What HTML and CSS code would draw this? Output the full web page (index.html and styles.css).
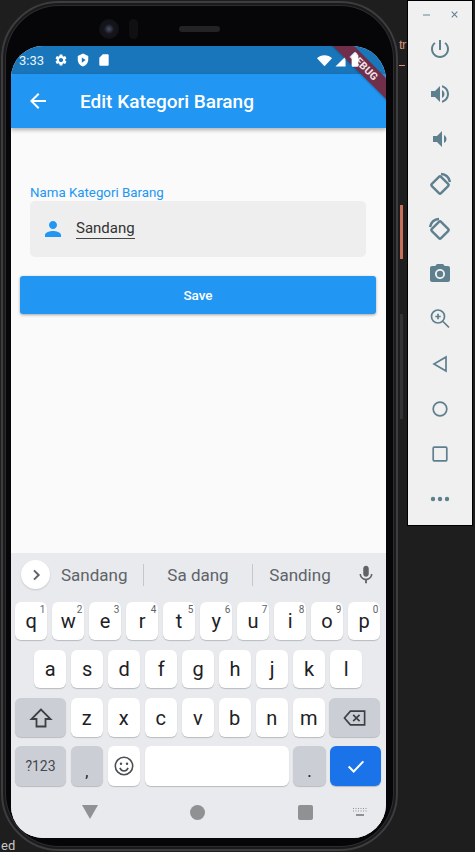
FILE: index.html
```html
<!DOCTYPE html>
<html lang="id">
<head>
  <meta charset="UTF-8">
  <title>Edit Kategori Barang</title>
  <link rel="stylesheet" href="styles.css">
</head>
<body>
  <div class="phone">
    <div class="phone-top">
      <span class="lens"></span>
      <span class="sensor"></span>
      <span class="speaker"></span>
    </div>
    <div class="screen">
      <div class="ribbon"><span>DEBUG</span></div>

      <div class="statusbar">
        <span class="time">3:33</span>
        <svg class="st st-gear" viewBox="0 0 24 24"><path d="M19.14 12.94c.04-.3.06-.61.06-.94 0-.32-.02-.64-.07-.94l2.03-1.58c.18-.14.23-.41.12-.61l-1.92-3.32c-.12-.22-.37-.29-.59-.22l-2.39.96c-.5-.38-1.03-.7-1.62-.94l-.36-2.54c-.04-.24-.24-.41-.48-.41h-3.84c-.24 0-.43.17-.47.41l-.36 2.54c-.59.24-1.13.57-1.62.94l-2.39-.96c-.22-.08-.47 0-.59.22L2.74 8.87c-.12.21-.08.47.12.61l2.03 1.58c-.05.3-.09.63-.09.94s.02.64.07.94l-2.03 1.58c-.18.14-.23.41-.12.61l1.92 3.32c.12.22.37.29.59.22l2.39-.96c.5.38 1.03.7 1.62.94l.36 2.54c.05.24.24.41.48.41h3.84c.24 0 .44-.17.47-.41l.36-2.54c.59-.24 1.13-.56 1.62-.94l2.39.96c.22.08.47 0 .59-.22l1.92-3.32c.12-.22.07-.47-.12-.61l-2.01-1.58zM12 15.6c-1.98 0-3.6-1.62-3.6-3.6s1.62-3.6 3.6-3.6 3.6 1.62 3.6 3.6-1.62 3.6-3.6 3.6z"/></svg>
        <svg class="st st-shield" viewBox="0 0 24 24"><path fill-rule="evenodd" d="M12 1L3 5v6c0 5.55 3.84 10.74 9 12 5.16-1.26 9-6.45 9-12V5l-9-4zM10 7.5v9l6.5-4.5z"/></svg>
        <svg class="st st-sd" viewBox="0 0 24 24"><path d="M18 2h-8L4.02 8 4 20c0 1.1.9 2 2 2h12c1.1 0 2-.9 2-2V4c0-1.1-.9-2-2-2z"/></svg>
        <span class="spacer"></span>
        <svg class="st st-wifi" viewBox="0 0 24 24"><path d="M12 21L0 8.5C3 5.5 7.3 3.5 12 3.5s9 2 12 5z"/></svg>
        <svg class="st st-signal" viewBox="0 0 24 24"><path d="M1 23h22V1z"/></svg>
        <svg class="st st-battery" viewBox="0 0 24 24"><path d="M15.67 4H14V2h-4v2H8.33C7.6 4 7 4.6 7 5.33v15.33C7 21.4 7.6 22 8.33 22h7.33c.74 0 1.34-.6 1.34-1.33V5.33C17 4.6 16.4 4 15.67 4z"/></svg>
      </div>

      <div class="appbar">
        <svg class="back" viewBox="0 0 24 24"><path d="M20 11H7.83l5.59-5.59L12 4l-8 8 8 8 1.41-1.41L7.83 13H20v-2z"/></svg>
        <span class="title">Edit Kategori Barang</span>
      </div>

      <div class="content">
        <div class="field-label">Nama Kategori Barang</div>
        <div class="field">
          <svg class="person" viewBox="0 0 24 24"><path d="M12 12c2.21 0 4-1.79 4-4s-1.79-4-4-4-4 1.79-4 4 1.79 4 4 4zm0 2c-2.67 0-8 1.34-8 4v2h16v-2c0-2.66-5.33-4-8-4z"/></svg>
          <span class="field-value">Sandang</span>
        </div>
        <div class="save">Save</div>
      </div>

      <div class="keyboard">
        <div class="suggest">
          <span class="expand">
            <svg viewBox="0 0 24 24"><path d="M9 5l7 7-7 7"/></svg>
          </span>
          <span class="word w1">Sandang</span>
          <span class="sep"></span>
          <span class="word w2">Sa dang</span>
          <span class="sep"></span>
          <span class="word w3">Sanding</span>
          <svg class="mic" viewBox="0 0 24 24"><path d="M12 14c1.66 0 3-1.34 3-3V5c0-1.66-1.34-3-3-3S9 3.34 9 5v6c0 1.66 1.34 3 3 3zm5.3-3c0 3-2.54 5.1-5.3 5.1S6.7 14 6.7 11H5c0 3.41 2.72 6.23 6 6.72V21h2v-3.28c3.28-.48 6-3.3 6-6.72h-1.7z"/></svg>
        </div>

        <div class="row">
          <span class="key">q<sup>1</sup></span>
          <span class="key">w<sup>2</sup></span>
          <span class="key">e<sup>3</sup></span>
          <span class="key">r<sup>4</sup></span>
          <span class="key">t<sup>5</sup></span>
          <span class="key">y<sup>6</sup></span>
          <span class="key">u<sup>7</sup></span>
          <span class="key">i<sup>8</sup></span>
          <span class="key">o<sup>9</sup></span>
          <span class="key">p<sup>0</sup></span>
        </div>
        <div class="row row-home">
          <span class="key">a</span>
          <span class="key">s</span>
          <span class="key">d</span>
          <span class="key">f</span>
          <span class="key">g</span>
          <span class="key">h</span>
          <span class="key">j</span>
          <span class="key">k</span>
          <span class="key">l</span>
        </div>
        <div class="row">
          <span class="key wide fn">
            <svg class="shift" viewBox="0 0 24 24"><path d="M12 3.5L2.5 13H7.5V20.5H16.5V13H21.5z"/></svg>
          </span>
          <span class="key">z</span>
          <span class="key">x</span>
          <span class="key">c</span>
          <span class="key">v</span>
          <span class="key">b</span>
          <span class="key">n</span>
          <span class="key">m</span>
          <span class="key wide fn">
            <svg class="bksp" viewBox="0 0 28 24"><path d="M9 4.5H24.5V19.5H9L2.5 12z"/><path d="M12 8.5l7 7M19 8.5l-7 7"/></svg>
          </span>
        </div>
        <div class="row row-last">
          <span class="key wide fn sym">?123</span>
          <span class="key fn punct">,</span>
          <span class="key">
            <svg class="emoji" viewBox="0 0 24 24"><circle cx="12" cy="12" r="9.5"/><path d="M7.5 14c1 2.4 2.6 3.4 4.5 3.4s3.500-1 4.500-3.400"/><circle class="eye" cx="8.700" cy="9.500" r="1.300"/><circle class="eye" cx="15.300" cy="9.500" r="1.300"/></svg>
          </span>
          <span class="key space"></span>
          <span class="key fn punct">.</span>
          <span class="key wide done">
            <svg class="check" viewBox="0 0 24 24"><path d="M4 12.500l5.500 5.500L20 7"/></svg>
          </span>
        </div>

        <div class="navbar">
          <span class="nav-back"></span>
          <span class="nav-home"></span>
          <span class="nav-recent"></span>
          <svg class="nav-kbd" viewBox="0 0 16 10"><path d="M1 1h1v1H1zM3.500 1h1v1h-1zM6 1h1v1H6zM8.500 1h1v1h-1zM11 1h1v1h-1zM13.500 1h1v1h-1zM1 3.500h1v1H1zM3.500 3.500h1v1h-1zM6 3.500h1v1H6zM8.500 3.500h1v1h-1zM11 3.500h1v1h-1zM13.500 3.500h1v1h-1zM4 7h8v2H4z"/></svg>
        </div>
      </div>
    </div>
  </div>

  <div class="gutter">
    <span class="code-bit">tr</span>
    <span class="squiggle"></span>
    <span class="scroll-mark"></span>
    <span class="scroll-dim"></span>
  </div>

  <div class="toolbar">
    <div class="win-btns">
      <span class="min"></span>
      <svg class="close" viewBox="0 0 10 10"><path d="M1 1l8 8M9 1L1 9"/></svg>
    </div>
    <svg class="tool" viewBox="0 0 24 24"><path d="M13 3h-2v10h2V3zm4.830 2.170l-1.420 1.420C17.990 7.860 19 9.810 19 12c0 3.870-3.130 7-7 7s-7-3.130-7-7c0-2.190 1.010-4.140 2.580-5.420L6.170 5.170C4.230 6.820 3 9.260 3 12c0 4.970 4.030 9 9 9s9-4.030 9-9c0-2.740-1.230-5.180-3.170-6.830z"/></svg>
    <svg class="tool" viewBox="0 0 24 24"><path d="M3 9v6h4l5 5V4L7 9H3zm13.500 3c0-1.770-1.020-3.290-2.500-4.030v8.050c1.480-.73 2.500-2.250 2.500-4.020zM14 3.230v2.060c2.890.86 5 3.540 5 6.710s-2.110 5.850-5 6.710v2.060c4.010-.91 7-4.490 7-8.770s-2.990-7.860-7-8.770z"/></svg>
    <svg class="tool" viewBox="0 0 24 24"><path d="M18.500 12c0-1.770-1.020-3.290-2.500-4.030v8.050c1.480-.73 2.500-2.250 2.500-4.020zM5 9v6h4l5 5V4L9 9H5z"/></svg>
    <svg class="tool line" viewBox="0 0 24 24"><rect x="5.500" y="6.500" width="13" height="13" rx="1.500" transform="rotate(45 12 13)"/><path d="M13 2c4.500.3 8 3.300 9 8"/></svg>
    <svg class="tool line" viewBox="0 0 24 24"><rect x="5.500" y="6.500" width="13" height="13" rx="1.500" transform="rotate(45 12 13)"/><path d="M11 2C6.500 2.300 3 5.300 2 10"/></svg>
    <svg class="tool" viewBox="0 0 24 24"><circle cx="12" cy="12" r="3.200"/><path d="M9 2L7.170 4H4c-1.100 0-2 .9-2 2v12c0 1.100.9 2 2 2h16c1.100 0 2-.9 2-2V6c0-1.100-.9-2-2-2h-3.170L15 2H9zm3 15c-2.760 0-5-2.240-5-5s2.240-5 5-5 5 2.240 5 5-2.240 5-5 5z"/></svg>
    <svg class="tool line thin" viewBox="0 0 24 24"><circle cx="10" cy="9.500" r="6.500"/><path d="M15 14.500l6 6M10 6.800v5.400M7.300 9.500h5.400"/></svg>
    <svg class="tool line thin" viewBox="0 0 24 24"><path d="M18 5v14L6 12z"/></svg>
    <svg class="tool line thin" viewBox="0 0 24 24"><circle cx="12" cy="12" r="6.800"/></svg>
    <svg class="tool line thin" viewBox="0 0 24 24"><rect x="5.200" y="5.200" width="13.600" height="13.600" rx="1"/></svg>
    <svg class="tool" viewBox="0 0 24 24"><circle cx="5" cy="12" r="2.200"/><circle cx="12" cy="12" r="2.200"/><circle cx="19" cy="12" r="2.200"/></svg>
  </div>

  <span class="code-bottom">ed</span>
</body>
</html>
```

FILE: styles.css
```css
* {
  box-sizing: border-box;
}
html, body {
  margin: 0;
  height: 852px;
  overflow: hidden;
}
body {
  display: flex;
  align-items: flex-start;
  width: 475px;
  background: #1e1e1e;
  font-family: Roboto, "Liberation Sans", sans-serif;
  position: relative;
}

/* phone */
.phone {
  flex: none;
  width: 397px;
  height: 850px;
  margin: 1px 0 0 1px;
  padding: 0 11px 0 8px;
  background: #060608;
  border: 2px solid #3d3d3f;
  border-radius: 58px;
  box-shadow: inset 0 0 0 2px #1a1a1c, inset 0 0 0 3px #2c2c2e;
}
.phone-top {
  height: 43px;
  display: flex;
  align-items: center;
  padding: 8px 0 0 88px;
}
.lens {
  width: 20px;
  height: 20px;
  border-radius: 50%;
  background: radial-gradient(circle, #4a5066 0, #15161c 35%, #0d0d10 100%);
}
.sensor {
  width: 9px;
  height: 20px;
  margin-left: 10px;
  border-radius: 5px;
  background: #101013;
}
.speaker {
  width: 41px;
  height: 6px;
  margin-left: 41px;
  border-radius: 3px;
  background: #232326;
}
.screen {
  position: relative;
  width: 375px;
  height: 792px;
  border-radius: 32px 34px 34px 32px;
  overflow: hidden;
  background: #fafafa;
  display: flex;
  flex-direction: column;
}

/* status bar */
.statusbar {
  height: 28px;
  flex: none;
  display: flex;
  align-items: center;
  padding: 0 23px 0 8px;
  background: #1976bb;
  color: #fff;
}
.time {
  font-size: 13px;
  width: 25px;
  margin-right: 10px;
  color: #eaf3fa;
}
.st {
  fill: #fff;
  flex: none;
}
.st-gear {
  width: 14px;
  height: 14px;
}
.st-shield {
  width: 14px;
  height: 14px;
  margin-left: 8px;
}
.st-sd {
  width: 14px;
  height: 14px;
  margin-left: 7px;
}
.spacer {
  flex: 1;
}
.st-wifi {
  width: 15px;
  height: 15px;
}
.st-signal {
  width: 11px;
  height: 11px;
  margin: 2px 1.500px 0 2.500px;
}
.st-battery {
  position: relative;
  z-index: 3;
  width: 16px;
  height: 16px;
}
.ribbon {
  position: absolute;
  z-index: 2;
  top: 13px;
  right: -33px;
  width: 110px;
  height: 15px;
  transform: rotate(45deg);
  background: #6f2f4b;
  color: #f3e4e8;
  font-size: 10.5px;
  font-weight: 700;
  line-height: 15px;
  text-align: center;
  letter-spacing: .3px;
  box-shadow: 0 1px 2px rgba(0,0,0,.2);
}

/* app bar */
.appbar {
  height: 54px;
  flex: none;
  display: flex;
  align-items: center;
  padding-left: 15px;
  background: #2196f3;
  color: #fff;
  box-shadow: 0 2px 4px rgba(0,0,0,.3);
  z-index: 1;
}
.back {
  width: 24px;
  height: 24px;
  fill: #fff;
}
.title {
  margin-left: 30px;
  font-size: 19px;
  font-weight: 500;
}

/* form */
.content {
  flex: 1;
  padding-top: 57px;
}
.field-label {
  margin-left: 19px;
  font-size: 13.3px;
  line-height: 16px;
  color: #2196f3;
}
.field {
  height: 56px;
  margin: 0 20px 0 19px;
  padding-left: 11px;
  display: flex;
  align-items: center;
  background: #eeeeee;
  border-radius: 5px;
}
.person {
  width: 24px;
  height: 24px;
  fill: #2196f3;
}
.field-value {
  margin-left: 11px;
  font-size: 15px;
  line-height: 19px;
  color: #333;
  border-bottom: 1px solid #444;
}
.save {
  height: 38px;
  margin: 19px 10px 0 9px;
  background: #2196f3;
  border-radius: 3px;
  color: #fff;
  font-size: 13.5px;
  font-weight: 500;
  line-height: 38px;
  text-align: center;
  box-shadow: 0 1px 3px rgba(0,0,0,.35);
}

/* keyboard */
.keyboard {
  flex: none;
  height: 285px;
  padding: 0 5px 0 4px;
  background: #e8eaed;
}
.suggest {
  height: 49px;
  display: flex;
  align-items: center;
  color: #5f6368;
}
.expand {
  width: 29px;
  height: 29px;
  margin: -6px 0 0 6px;
  border-radius: 50%;
  background: #fff;
  box-shadow: 0 1px 2px rgba(0,0,0,.15);
  display: flex;
  align-items: center;
  justify-content: center;
}
.expand svg {
  width: 16px;
  height: 16px;
  fill: none;
  stroke: #5f6368;
  stroke-width: 3;
}
.word {
  font-size: 17px;
  text-align: center;
  margin-top: -5px;
}
.w1 {
  width: 82px;
  margin-left: 11px;
  text-align: left;
}
.w2 {
  width: 108px;
}
.w3 {
  width: 94px;
}
.sep {
  width: 1px;
  height: 22px;
  margin-top: -5px;
  background: #c4c7cc;
}
.mic {
  width: 22px;
  height: 22px;
  margin: -6px 0 0 8px;
  fill: #5f6368;
}
.row {
  display: flex;
  gap: 4.6px;
  height: 38px;
  margin-bottom: 10px;
}
.row-home {
  padding-left: 19px;
}
.row-last {
  height: 40px;
  margin-top: -1px;
  margin-bottom: 0;
}
.row:nth-of-type(4) {
  height: 39px;
}
.key {
  position: relative;
  width: 32.4px;
  flex: none;
  display: flex;
  align-items: center;
  justify-content: center;
  background: #fff;
  border-radius: 6px;
  box-shadow: 0 1px 1px rgba(0,0,0,.2);
  color: #202124;
  font-size: 20px;
}
.key sup {
  position: absolute;
  top: 2px;
  right: 2px;
  font-size: 10px;
  line-height: 11px;
  color: #5f6368;
}
.wide {
  width: 51px;
}
.fn {
  background: #ccced5;
}
.sym {
  font-size: 14px;
  color: #45484d;
}
.punct {
  align-items: flex-end;
  padding-bottom: 6px;
  font-size: 14px;
  font-weight: 500;
}
.space {
  width: 144px;
}
.done {
  background: #1a73e8;
}
.shift, .bksp {
  fill: none;
  stroke: #3c4043;
  stroke-width: 1.800;
}
.shift {
  width: 24px;
  height: 24px;
}
.bksp {
  width: 26px;
  height: 22px;
}
.emoji {
  width: 22px;
  height: 22px;
  fill: none;
  stroke: #4a4d52;
  stroke-width: 1.700;
}
.emoji .eye {
  fill: #4a4d52;
  stroke: none;
}
.check {
  width: 22px;
  height: 22px;
  fill: none;
  stroke: #fff;
  stroke-width: 2.200;
}
.navbar {
  height: 52px;
  display: flex;
  align-items: center;
  padding-left: 67px;
}
.nav-back {
  width: 0;
  height: 0;
  border-left: 8px solid transparent;
  border-right: 8px solid transparent;
  border-top: 14px solid #909193;
}
.nav-home {
  width: 15px;
  height: 15px;
  margin-left: 92px;
  border-radius: 50%;
  background: #909193;
}
.nav-recent {
  width: 15px;
  height: 15px;
  margin-left: 93px;
  border-radius: 2px;
  background: #909193;
}
.nav-kbd {
  width: 16px;
  height: 10px;
  margin-left: 39px;
  fill: #8f9194;
}

/* bits of the editor behind the emulator */
.gutter {
  flex: none;
  width: 9px;
  height: 852px;
  overflow: hidden;
  display: flex;
  flex-direction: column;
  align-items: flex-start;
  padding: 36px 0 0 1px;
}
.code-bit {
  font-family: "Liberation Sans", sans-serif;
  font-size: 13px;
  line-height: 18px;
  letter-spacing: -.5px;
  color: #ce9178;
}
.squiggle {
  width: 6px;
  height: 1px;
  margin-top: 11px;
  background: #ce9178;
}
.scroll-mark {
  width: 3px;
  height: 54px;
  margin: 139px 0 0 1px;
  background: #c9705a;
}
.scroll-dim {
  width: 3px;
  height: 105px;
  margin: 55px 0 0 1px;
  background: #333335;
}
.code-bottom {
  position: absolute;
  left: 1px;
  bottom: 0;
  font-size: 13px;
  line-height: 13px;
  color: #c8c8c8;
}

/* emulator toolbar */
.toolbar {
  flex: none;
  width: 66px;
  height: 526px;
  background: #f0f0f0;
  border: 1px solid #000;
  display: flex;
  flex-direction: column;
  align-items: center;
}
.win-btns {
  flex: none;
  height: 27px;
  width: 100%;
  display: flex;
  align-items: center;
  justify-content: center;
  gap: 21px;
  margin-bottom: 9px;
}
.min {
  width: 7px;
  height: 2px;
  background: #a9bcc4;
}
.close {
  width: 7px;
  height: 7px;
  fill: none;
  stroke: #5f8090;
  stroke-width: 1.500;
}
.tool {
  flex: none;
  width: 24px;
  height: 24px;
  margin-bottom: 21px;
  fill: #5e7f8e;
}
.tool:last-child {
  margin-bottom: 0;
}
.line {
  fill: none;
  stroke: #5e7f8e;
  stroke-width: 2.400;
}
.thin {
  stroke-width: 1.700;
}
```
